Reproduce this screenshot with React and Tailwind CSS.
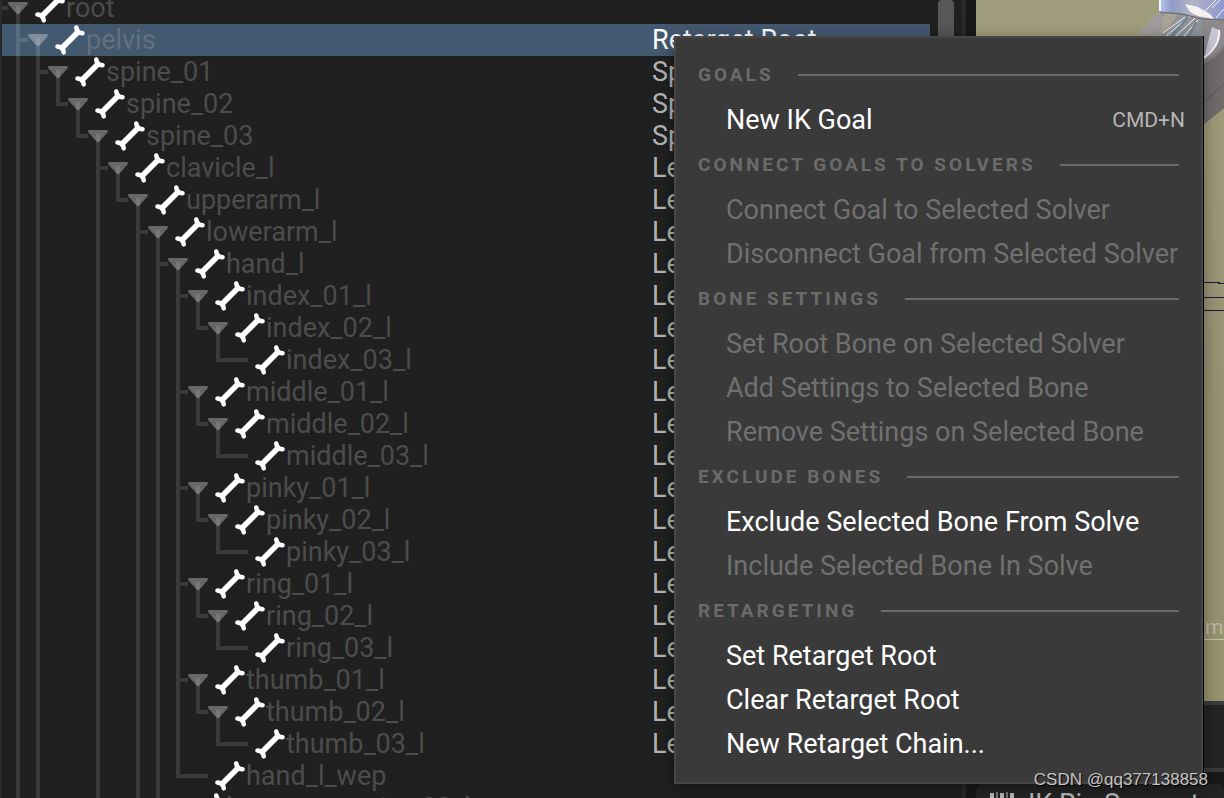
import clsx from 'clsx';

// every row: [depth, name, chain, has children]
const bones = [
  [0, 'root', '', true],
  [1, 'pelvis', 'Retarget Root', true],
  [2, 'spine_01', 'Spine', true],
  [3, 'spine_02', 'Spine', true],
  [4, 'spine_03', 'Spine', true],
  [5, 'clavicle_l', 'LeftClavicle', true],
  [6, 'upperarm_l', 'LeftArm', true],
  [7, 'lowerarm_l', 'LeftArm', true],
  [8, 'hand_l', 'LeftArm', true],
  [9, 'index_01_l', 'LeftIndex', true],
  [10, 'index_02_l', 'LeftIndex', true],
  [11, 'index_03_l', 'LeftIndex', false],
  [9, 'middle_01_l', 'LeftMiddle', true],
  [10, 'middle_02_l', 'LeftMiddle', true],
  [11, 'middle_03_l', 'LeftMiddle', false],
  [9, 'pinky_01_l', 'LeftPinky', true],
  [10, 'pinky_02_l', 'LeftPinky', true],
  [11, 'pinky_03_l', 'LeftPinky', false],
  [9, 'ring_01_l', 'LeftRing', true],
  [10, 'ring_02_l', 'LeftRing', true],
  [11, 'ring_03_l', 'LeftRing', false],
  [9, 'thumb_01_l', 'LeftThumb', true],
  [10, 'thumb_02_l', 'LeftThumb', true],
  [11, 'thumb_03_l', 'LeftThumb', false],
  [9, 'hand_l_wep', '', false],
  [8, 'lowerarm_twist_02_l', '', false],
];

// depths whose parent still has siblings below the visible rows
const openDepths = [1, 2, 5, 7];

const menu = [
  { title: 'GOALS', items: [{ label: 'New IK Goal', enabled: true, keys: 'CMD+N' }] },
  {
    title: 'CONNECT GOALS TO SOLVERS',
    items: [{ label: 'Connect Goal to Selected Solver' }, { label: 'Disconnect Goal from Selected Solver' }],
  },
  {
    title: 'BONE SETTINGS',
    items: [
      { label: 'Set Root Bone on Selected Solver' },
      { label: 'Add Settings to Selected Bone' },
      { label: 'Remove Settings on Selected Bone' },
    ],
  },
  {
    title: 'EXCLUDE BONES',
    items: [{ label: 'Exclude Selected Bone From Solve', enabled: true }, { label: 'Include Selected Bone In Solve' }],
  },
  {
    title: 'RETARGETING',
    items: [
      { label: 'Set Retarget Root', enabled: true },
      { label: 'Clear Retarget Root', enabled: true },
      { label: 'New Retarget Chain...', enabled: true },
    ],
  },
];

// does a sibling at this depth show up again after row i
function hasNext(i, depth) {
  for (let j = i + 1; j < bones.length; j++) {
    if (bones[j][0] === depth) return true;
    if (bones[j][0] < depth) return false;
  }
  return openDepths.includes(depth);
}

function Wires({ index, depth, parent }) {
  const lines = [];
  for (let d = 1; d < depth; d++) {
    if (hasNext(index, d)) lines.push(<path key={d} d={`M${d * 20 - 4} 0V32`} />);
  }
  const x = depth * 20 - 4;
  const end = hasNext(index, depth) ? 32 : 18;
  return (
    <svg width={depth * 20 + 32} height="32" className="shrink-0" aria-hidden="true">
      <g fill="none" stroke="#fff" strokeOpacity="0.12" strokeWidth="4">
        {lines}
        {depth > 0 && <path d={`M${x} 0V${end}`} />}
        <path d={`M${x + 2} 16H${parent ? x + 10 : x + 30}`} />
        {parent && <path d={`M${x + 20} 14V32`} />}
      </g>
      {parent && (
        <path
          d={`M${x + 11} 10H${x + 29}Q${x + 31} 11 ${x + 29} 13L${x + 22} 21Q${x + 20} 23 ${x + 18} 21L${x + 11} 13Q${x + 9} 11 ${x + 11} 10Z`}
          fill="#fff"
          fillOpacity="0.32"
        />
      )}
    </svg>
  );
}

function Bone() {
  return (
    <svg width="32" height="32" viewBox="0 0 32 32" className="shrink-0" aria-hidden="true">
      <g stroke="#fff" strokeLinecap="round" strokeLinejoin="round" fill="none">
        <path d="M8 24L24 8" strokeWidth="5.500" />
        <path d="M22.300 3.500L23.500 8.500L28.500 9.200M3.500 22.500L8.500 23.500L9.700 28.300" strokeWidth="4.600" />
      </g>
    </svg>
  );
}

function Tree() {
  return (
    <section className="relative flex min-w-0 basis-[976px] border-l-2 border-[#2a2a2a] bg-[#202020]">
      <ul role="tree" aria-label="Bones" className="-mt-2 min-w-0 flex-1">
        {bones.map(([depth, name, chain, parent], i) => {
          const selected = name === 'pelvis';
          return (
            <li
              key={name}
              role="treeitem"
              aria-selected={selected}
              className={clsx('flex h-8 items-center', selected && 'bg-[#435970]')}
            >
              <div className="flex w-[650px] shrink-0 items-center">
                <Wires index={i} depth={depth} parent={parent} />
                <Bone />
                <span className={selected ? 'text-[#65707c]' : 'text-[#4c4c4c]'}>{name}</span>
              </div>
              <span className={selected ? 'text-white' : 'text-[#b5b5b5]'}>{chain}</span>
            </li>
          );
        })}
      </ul>
      <div className="mx-2 mb-8 w-4 rounded bg-[#575757]" />
      <div className="w-1 bg-[#2a2a2a]" />
      <div className="w-[10px] bg-[#181818]" />
    </section>
  );
}

function Viewport() {
  return (
    <section className="flex min-w-0 flex-1 flex-col bg-[#181818]">
      <svg
        viewBox="0 0 248 701"
        preserveAspectRatio="xMaxYMin slice"
        className="h-[701px] w-full shrink-0 bg-[#9b9876]"
        role="img"
        aria-label="Viewport"
      >
        <defs>
          <linearGradient id="floor" x1="0" y1="0" x2="0" y2="1">
            <stop offset="0" stopColor="#a19e7d" />
            <stop offset="0.5" stopColor="#979373" />
            <stop offset="1" stopColor="#97926f" />
          </linearGradient>
          <linearGradient id="steel" x1="0" y1="0" x2="1" y2="1">
            <stop offset="0" stopColor="#aaa4a5" />
            <stop offset="0.5" stopColor="#918d8c" />
            <stop offset="1" stopColor="#5d5a59" />
          </linearGradient>
          <linearGradient id="glass" x1="0" y1="0" x2="1" y2="0">
            <stop offset="0" stopColor="#b9c8f0" />
            <stop offset="0.2" stopColor="#8f9cc6" />
            <stop offset="0.5" stopColor="#b4b3c4" />
            <stop offset="1" stopColor="#8f99d0" />
          </linearGradient>
        </defs>
        <rect width="248" height="701" fill="url(#floor)" />
        <path d="M161 35L182 12L248 8V108L228 124V35Z" fill="url(#steel)" />
        <path d="M248 48Q240 58 228 64V124L248 108Z" fill="#6f6b6a" />
        <path d="M228 102L248 84" stroke="#5b5857" fill="none" />
        <path d="M183 0H248V19L226 18L206 13L184 12Z" fill="url(#glass)" />
        <path d="M184 13L208 14L226 19L229 36H185L196 25Z" fill="#8f9297" />
        <path d="M188 14L202 14L194 26L184 35Z" fill="#a9a393" />
        <path d="M226 20L248 24V44Q240 56 228 60Z" fill="#8d898f" />
        <path d="M228 58Q246 44 243 30L236 27L232 42Z" fill="#c9c7d4" />
        {/* highlights on the metal */}
        <path d="M209 4L222 7L234 14L238 19L222 16L214 12Z" fill="#f6f2f2" />
        <g fill="none" stroke="#f4f3fb">
          <path d="M184 0V11" strokeWidth="2" />
          <path d="M228 58Q245 45 243 30" strokeWidth="2" />
          <path d="M214 16L190 36M219 18L200 36M222 20L208 36M209 17L187 33M236 8L244 0M228 12L240 0M240 18L248 9" />
        </g>
        <path d="M212 17L196 36M220 22L213 36" stroke="#6d8299" fill="none" strokeWidth="2" />
        <path d="M184 12L206 14L226 19L248 20" stroke="#6b666c" fill="none" />
        <g stroke="#1d1b3c">
          <path d="M228 282.500H244M242 283.500H248M228 297.500H248M228 310.500H248" />
        </g>
        <path d="M228 639.500H248" stroke="#c4c1ae" />
        <text x="229" y="634" fontSize="21" fill="#bbb8a4">m</text>
      </svg>
      <div className="h-[71px] shrink-0 border-y-4 border-[#3b3b3b] bg-[#242424]" />
      <div className="mt-3 flex h-12 items-start gap-3 rounded-t-lg bg-[#242424] pl-3 text-[#bbb]">
        <svg width="28" height="32" viewBox="0 0 28 32" className="mt-2 shrink-0" aria-hidden="true">
          <path d="M2 1H6V30H2ZM12 1H16V30H12ZM22 1H26V30H22Z" fill="#bbb" />
          <path d="M8 0H10V14H8ZM18 0H20V14H18Z" fill="#777" />
        </svg>
        <span className="mt-1 whitespace-nowrap">IK Rig Support</span>
      </div>
    </section>
  );
}

function ContextMenu() {
  return (
    <div
      role="menu"
      className="absolute left-[674px] top-9 w-[529px] border-2 border-[#464646] bg-[#3a3a3a] pb-4 pt-[14px] shadow-[1px_0_0_#000,0_4px_16px_rgba(0,0,0,0.4)]"
    >
      {menu.map((group) => (
        <div key={group.title} role="group" aria-label={group.title}>
          <div className="flex h-[46px] items-center gap-6 pl-[22px] pr-[22px] text-[19px] font-bold tracking-[3px] text-[#6b6b6b]">
            {group.title}
            <span className="h-[2px] flex-1 bg-[#6b6b6b]" />
          </div>
          {group.items.map((item) => (
            <button
              key={item.label}
              type="button"
              role="menuitem"
              disabled={!item.enabled}
              className="flex h-11 w-full items-center justify-between whitespace-nowrap pl-[50px] pr-4 text-white disabled:text-[#707070]"
            >
              {item.label}
              {item.keys && <kbd className="font-[Roboto,sans-serif] text-[21px] text-[#b5b5b5]">{item.keys}</kbd>}
            </button>
          ))}
        </div>
      ))}
    </div>
  );
}

export default function App() {
  return (
    <main className="relative flex h-screen overflow-hidden bg-[#181818] font-[Roboto,sans-serif] text-[27px] leading-8">
      <Tree />
      <Viewport />
      <ContextMenu />
      <span className="absolute bottom-1 right-4 font-['Liberation_Sans',sans-serif] text-[17px] leading-7 text-[#c5c5c5] [text-shadow:1px_1px_1px_#000]">
        CSDN @qq377138858
      </span>
    </main>
  );
}
